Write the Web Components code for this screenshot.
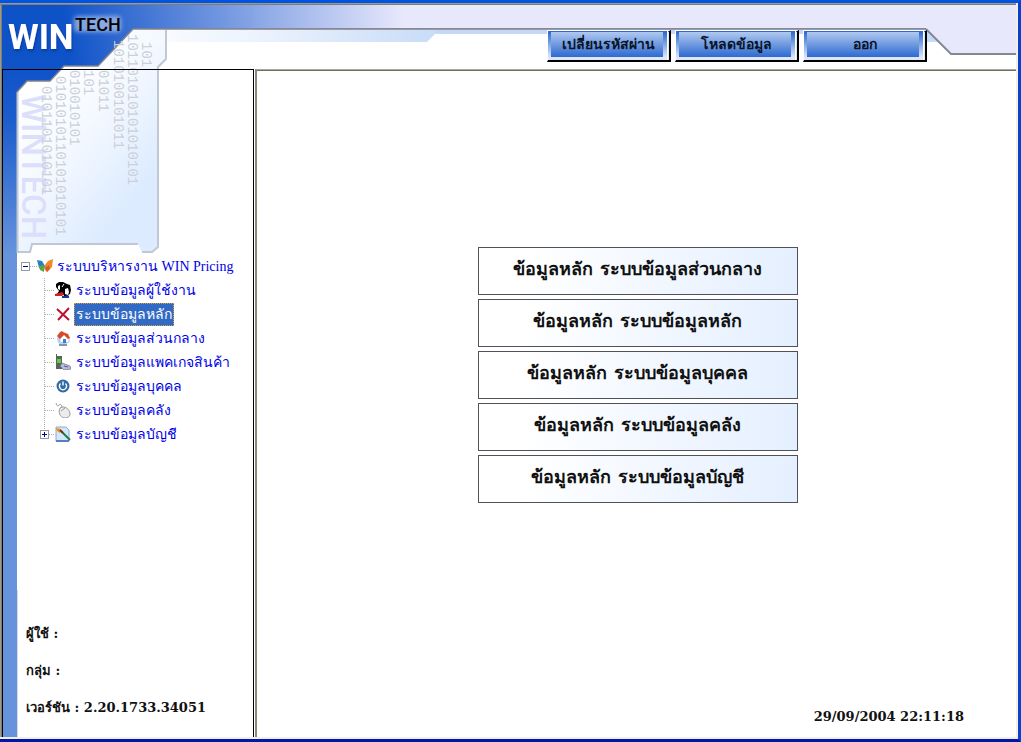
<!DOCTYPE html>
<html lang="th">
<head>
<meta charset="utf-8">
<title>WIN Pricing</title>
<style>
html,body{margin:0;background:#fff}
body{font-family:"DejaVu Serif","Noto Sans Thai",serif;color:#111}
</style>
</head>
<body>
<win-app>
  <win-art slot="art"></win-art>
  <win-header slot="header">
    <nav-button>เปลี่ยนรหัสผ่าน</nav-button>
    <nav-button>โหลดข้อมูล</nav-button>
    <nav-button>ออก</nav-button>
  </win-header>
  <win-sidebar slot="side">
    <tree-item root icon="wings" state="open">ระบบบริหารงาน WIN Pricing
      <tree-item slot="kids" icon="users">ระบบข้อมูลผู้ใช้งาน</tree-item>
      <tree-item slot="kids" icon="cross" selected>ระบบข้อมูลหลัก</tree-item>
      <tree-item slot="kids" icon="home">ระบบข้อมูลส่วนกลาง</tree-item>
      <tree-item slot="kids" icon="phone">ระบบข้อมูลแพคเกจสินค้า</tree-item>
      <tree-item slot="kids" icon="power">ระบบข้อมูลบุคคล</tree-item>
      <tree-item slot="kids" icon="mouse">ระบบข้อมูลคลัง</tree-item>
      <tree-item slot="kids" icon="brush" state="closed" last>ระบบข้อมูลบัญชี</tree-item>
    </tree-item>
    <session-line slot="info">ผู้ใช้ :</session-line>
    <session-line slot="info">กลุ่ม :</session-line>
    <session-line slot="info">เวอร์ชัน : 2.20.1733.34051</session-line>
  </win-sidebar>
  <win-main slot="main">
    <menu-button>ข้อมูลหลัก ระบบข้อมูลส่วนกลาง</menu-button>
    <menu-button>ข้อมูลหลัก ระบบข้อมูลหลัก</menu-button>
    <menu-button>ข้อมูลหลัก ระบบข้อมูลบุคคล</menu-button>
    <menu-button>ข้อมูลหลัก ระบบข้อมูลคลัง</menu-button>
    <menu-button>ข้อมูลหลัก ระบบข้อมูลบัญชี</menu-button>
    <time slot="clock">29/09/2004 22:11:18</time>
  </win-main>
</win-app>
<script>
const define = (name, html, setup) => {
  const t = document.createElement('template');
  t.innerHTML = html;
  customElements.define(name, class extends HTMLElement {
    constructor() {
      super();
      this.attachShadow({mode: 'open'}).append(t.content.cloneNode(true));
    }
    connectedCallback() { if (setup) setup(this, this.shadowRoot); }
  });
};

define('win-app', `
<style>
:host{display:grid;box-sizing:border-box;min-height:100vh;grid-template-columns:252px 1fr;grid-template-rows:64px 1fr;
 border-style:solid;border-width:3px 3px 3px 0;border-color:#0054e3 #0a3fd0 #0018a8 #aca899;
 padding:2px;
 background:linear-gradient(#aca899,#716f64) 0 0/calc(100% - 2px) 2px no-repeat,
  linear-gradient(90deg,#aca899,#716f64) 0 0/2px calc(100% - 2px) no-repeat,
  linear-gradient(#f1efe2,#f1efe2) 0 100%/100% 2px no-repeat,
  linear-gradient(#f1efe2,#f1efe2) 100% 0/2px 100% no-repeat,#fff}
slot[name=art]::slotted(*){grid-area:1/1/3/2;z-index:0}
slot[name=header]::slotted(*){grid-area:1/1/2/3}
slot[name=side]::slotted(*){grid-area:2/1/3/2;z-index:1}
slot[name=main]::slotted(*){grid-area:2/2/3/3}
</style>
<slot name="header"></slot><slot name="art"></slot><slot name="side"></slot><slot name="main"></slot>`);

define('win-art', `
<style>
:host{display:flex;flex-direction:column;pointer-events:none}
svg{display:block;flex:none}
.strip{flex:1;width:15px;background:#6693dc}
</style>
<svg width="252" height="250" viewBox="2 5 252 250" aria-hidden="true">
<defs>
<linearGradient id="b" gradientUnits="userSpaceOnUse" x1="2" y1="60" x2="2" y2="255"><stop offset="0" stop-color="#0e52c8"/><stop offset=".3" stop-color="#1c5ccc"/><stop offset="1" stop-color="#6693dc"/></linearGradient>
<linearGradient id="h" gradientUnits="userSpaceOnUse" x1="60" y1="0" x2="400" y2="-50"><stop offset="0" stop-color="#0e52c8"/><stop offset="1" stop-color="#e8e8fc"/></linearGradient>
<linearGradient id="p" gradientUnits="userSpaceOnUse" x1="30" y1="80" x2="150" y2="180"><stop offset="0" stop-color="#fff"/><stop offset=".45" stop-color="#f5f9ff"/><stop offset="1" stop-color="#dcebff"/></linearGradient>
<linearGradient id="u" gradientUnits="userSpaceOnUse" x1="166" y1="0" x2="425" y2="0"><stop offset="0" stop-color="#f8fbff"/><stop offset="1" stop-color="#d4e4fa"/></linearGradient>
<filter id="g" x="-20%" y="-50%" width="140%" height="200%"><feGaussianBlur stdDeviation="2"/></filter>
<filter id="s" x="-10%" y="-10%" width="120%" height="130%"><feDropShadow dx="1" dy="2" stdDeviation="1" flood-color="#062c80" flood-opacity=".6"/></filter>
</defs>
<path d="M166 30H254V42H166Z" fill="url(#u)"/>
<path d="M2 5H150V29H133L98 66H64L50 81H27L17 92V255H2Z" fill="url(#b)"/>
<path d="M2 5H254V29H133L98 66H2Z" fill="url(#h)"/>
<path d="M2 60H70L64 66L50 81H27L17 92H2Z" fill="url(#b)"/>
<path d="M133 29H166V59L158 67V247L152 252H142L138 244H32L30 252H18L17 92L27 81H50L64 66H98Z" fill="url(#p)"/>
<path d="M17.500 92V252H30L32 244H138M142 252H152L158 247V67L166 59V30" fill="none" stroke="#c0c8d4" stroke-width="2"/>
<path d="M254 29H133L98 66H64L50 81H27L17 92" fill="none" stroke="#80828c" stroke-width="1.500"/>
<text transform="translate(22 94) rotate(90)" font-family="Roboto" font-weight="500" font-size="33" fill="#dcdffc">WINTECH</text>
<g font-family="Liberation Mono" font-size="14" fill="#cbd0d9">
<text transform="translate(42 86) rotate(90)">0101101010101</text>
<text transform="translate(56 76) rotate(90)">0101010110101010101</text>
<text transform="translate(70 70) rotate(90)">010010101</text>
<text transform="translate(84 70) rotate(90)">101</text>
<text transform="translate(99 70) rotate(90)">01011</text>
<text transform="translate(114 40) rotate(90)">1010100101011</text>
<text transform="translate(128 34) rotate(90)">101101010101010101</text>
<text transform="translate(142 42) rotate(90)">101</text>
</g>
<text x="8" y="49" font-family="Roboto" font-weight="700" font-size="35" fill="#fff" filter="url(#s)">WIN</text>
<rect x="74" y="16" width="47" height="16" rx="4" fill="#fff" opacity=".45" filter="url(#g)"/>
<text x="75" y="31" font-family="Roboto" font-weight="500" font-size="18" fill="#000">TECH</text>
</svg>
<div class="strip"></div>`);

define('win-header', `
<style>
:host{display:grid;grid-template-columns:252px 1fr 90px;height:64px}
.m,.r,.band,nav{grid-row:1}
.m{grid-column:2;height:64px;background:linear-gradient(#807f8c,#a3a3b0) 0 23px/100% 2px no-repeat,
 linear-gradient(90deg,#88a6e5,#e8e8fc 150px) 0 0/100% 23px no-repeat,
 linear-gradient(#c4d4f5,#c8daf8) 180px 25px/calc(100% - 180px) 4px no-repeat}
.band{grid-column:2;z-index:1;width:182px;margin-top:25px;display:block}
.r{grid-column:3;display:block}
nav{grid-column:1/4;display:flex;gap:4px;justify-content:flex-end;padding:25px 89px 0 0;z-index:2}
</style>
<div class="m"></div>
<svg class="band" height="12" viewBox="0 0 182 12" aria-hidden="true"><defs><linearGradient id="k"><stop offset="0" stop-color="#ecf3fd"/><stop offset="1" stop-color="#c8dcf8"/></linearGradient></defs><path d="M0 0H182V3L173 12H0Z" fill="url(#k)"/></svg>
<svg class="r" width="90" height="64" viewBox="926 5 90 64" aria-hidden="true"><path d="M926 5H1016V54H951L927 29H926Z" fill="#e8e8fc"/><path d="M926 29L940 42H926Z" fill="#c4dcf6"/><path d="M926 29L951 54H1016" stroke="#878793" stroke-width="2" fill="none"/></svg>
<nav><slot></slot></nav>`);

define('nav-button', `
<style>
:host{display:block;width:124px;height:32px}
button{display:block;box-sizing:border-box;width:100%;height:100%;padding:0 0 4px;cursor:pointer;
 border:1px solid #fff;border-right:2px solid #000;border-bottom:2px solid #000;
 font:bold 14px/24px "DejaVu Serif",serif;color:#0a1428;
 background:
  linear-gradient(#b0c9f0,#2d6ad0) 3px 1px/calc(100% - 9px) 25px no-repeat,
  linear-gradient(#2d6ad0,#dbe6f8) 0 1px/3px 25px no-repeat,
  linear-gradient(#fff,#fff) calc(100% - 1px) 0/1px 100% no-repeat,
  linear-gradient(#2d6ad0,#dbe6f8) calc(100% - 2px) 1px/4px 25px no-repeat,
  linear-gradient(#2d6ad0,#2d6ad0) 0 0/100% 1px no-repeat,
  #dfe7f6}
</style>
<button type="button"><slot></slot></button>`);

define('win-sidebar', `
<style>
:host{display:flex;flex-direction:column;box-sizing:border-box;border:solid #000;border-width:1px 1px 0 1px}
nav{padding:184px 0 0 18px}
footer{margin-top:auto;border-left:1px solid #d8d8e0;margin-left:14px;padding:32px 0 18px 8px;display:grid;gap:14px}
</style>
<nav aria-label="เมนู"><slot></slot></nav>
<footer><slot name="info"></slot></footer>`);

define('session-line', `
<style>:host{display:block;font:bold 13px/23px "DejaVu Serif",serif}</style><slot></slot>`);

const icons = {
wings:'<path d="M0 2l5 1 3 5-1 5-5-3z" fill="#2a7fc0"/><path d="M2 8l5-1v7l-4-2z" fill="#58a83c"/><path d="M8 7l3-4 5-2-1 8-5 5-2-2z" fill="#f08a28"/><path d="M8 10l4-3 1 4-3 3z" fill="#e05a20"/>',
users:'<path d="M1 2l3-2h4l4 2 3 1 1 5-1 4-2 1 1 3H8l1-3-3-1H2l2-3-3-4z" fill="#000"/><path d="M0 12l4-1 3-1 2 2-2 2H0z" fill="#d02020"/><path d="M10 7l3-1 1 4-1 3-3-1z" fill="#fff"/><path d="M3 4l2-1v5L3 7z" fill="#fff"/><path d="M7 5l2-3" stroke="#fff"/><path d="M7 14h3l2-1 2 1v2H7z" fill="#123a9c"/>',
cross:'<path d="M2 3l12 11M14 2L3 14" stroke="#c01030" stroke-width="2" fill="none"/>',
home:'<circle cx="8" cy="9" r="6" fill="#b8d8f4"/><path d="M5 7l4-3 5 3v5l-5 1-4-1z" fill="#fff" stroke="#9ab4d8" stroke-width=".7"/><path d="M2 6l3-4 2-1 1 1 5 2 2 4-2 1-4-4-4 4z" fill="#d84a28"/><path d="M8 9h3v4H8z" fill="#3c80c8"/><path d="M4 15h8" stroke="#8894a8" stroke-width="2"/>',
phone:'<path d="M1 0h1v2h5v13H1z" fill="#58645c"/><path d="M2 5h4v4H2z" fill="#60d038"/><path d="M7 9l8 3 1 3-7 1-4-4z" fill="#b8bcd8" stroke="#687088" stroke-width=".7"/><path d="M9 12l4 1" stroke="#7050a0"/>',
power:'<circle cx="8" cy="8" r="6.500" fill="#316da4"/><path d="M5.500 5.500a3.600 3.600 0 1 0 5 0M8 3.500v4" fill="none" stroke="#fff" stroke-width="1.400"/>',
mouse:'<path d="M5 6c4-3 10 1 10 6 0 3-3 4-6 4-4-1-6-6-4-10z" fill="#ececec" stroke="#999"/><path d="M7 6c0-3-2-5-3-3S2 4 1 1M6 9l4-3" fill="none" stroke="#999"/>',
brush:'<path d="M1 1h10l3 3v11H1z" fill="#d4e6fa" stroke="#88aad8"/><path d="M1 15h13" stroke="#5680c0" stroke-width="2"/><path d="M6 5l9 9" stroke="#1c7c48" stroke-width="2"/><path d="M1 2l5 1-1 4-3-2z" fill="#e89020"/><path d="M5 4l3 3" stroke="#803010" stroke-width="2"/>'};

define('tree-item', `
<style>
:host{display:block;color:#0000e8}
.row{display:flex;align-items:center;height:24px}
.join{display:flex;align-items:center;width:16px;flex:none;height:24px}
.box{flex:none;box-sizing:border-box;width:9px;height:9px;padding:0;border:1px solid #8f9ca8;background:
 linear-gradient(#00a,#00a) 1px 3px/5px 1px no-repeat,#fff}
.box.closed{background:linear-gradient(#00a,#00a) 1px 3px/5px 1px no-repeat,linear-gradient(#00a,#00a) 3px 1px/1px 5px no-repeat,#fff}
.dots{flex:1;height:1px;background:repeating-linear-gradient(90deg,#aaa 0 1px,transparent 1px 2px)}
svg{flex:none;width:16px;height:16px}
a{color:inherit;text-decoration:none;white-space:nowrap;font:14px/23px "Liberation Serif",serif;padding:0 2px;margin-left:2px}
:host([selected]) a{background:#316ac5;color:#fff;outline:1px dotted #e0a030;outline-offset:-1px}
:host(:not([root])) .row{background:repeating-linear-gradient(#aaa 0 1px,transparent 1px 2px) 4px 0/1px 100% no-repeat}
:host([last]) .row{background-size:1px 12px}
:host(:not([root])) .dots{margin-left:5px}
:host([last]) .dots{margin-left:0}
.kids{padding-left:19px}
:host(:not([root])) .join{width:15px}
:host(:not([root])) a{margin-left:3px}
:host(:not([root])) .kids{display:none}
</style>
<div class="row"><span class="join"><span class="dots"></span></span><svg viewBox="0 0 16 16" aria-hidden="true"></svg><a href="#"><slot></slot></a></div>
<div class="kids"><slot name="kids"></slot></div>`, (host, root) => {
  root.querySelector('svg').innerHTML = icons[host.getAttribute('icon')] || '';
  const state = host.getAttribute('state');
  if (state && !root.querySelector('.box')) {
    const b = document.createElement('button');
    b.type = 'button';
    b.className = 'box ' + state;
    b.setAttribute('aria-label', state === 'open' ? 'ยุบ' : 'ขยาย');
    root.querySelector('.join').prepend(b);
  }
});

define('win-main', `
<style>
:host{display:flex;flex-direction:column;align-items:center;border-left:2px solid #8a877a;border-top:1px solid #aca899;box-shadow:inset 0 1px #716f64;margin-left:1px;background:#fff}
section{display:grid;gap:4px;padding:177px 0 0 2px;width:320px}
footer{margin-top:auto;align-self:flex-end;padding:0 52px 10px 0;font:bold 13px/20px "DejaVu Serif",serif}
</style>
<section><slot></slot></section>
<footer><slot name="clock"></slot></footer>`);

define('menu-button', `
<style>
:host{display:block;height:48px}
button{display:block;box-sizing:border-box;width:100%;height:100%;padding:0 0 4px;border:1px solid #50525a;cursor:pointer;
 background:linear-gradient(100deg,#fff 15%,#e4efff);font:bold 18px/24px "DejaVu Serif",serif;color:#111}
</style>
<button type="button"><slot></slot></button>`);
</script>
</body>
</html>
